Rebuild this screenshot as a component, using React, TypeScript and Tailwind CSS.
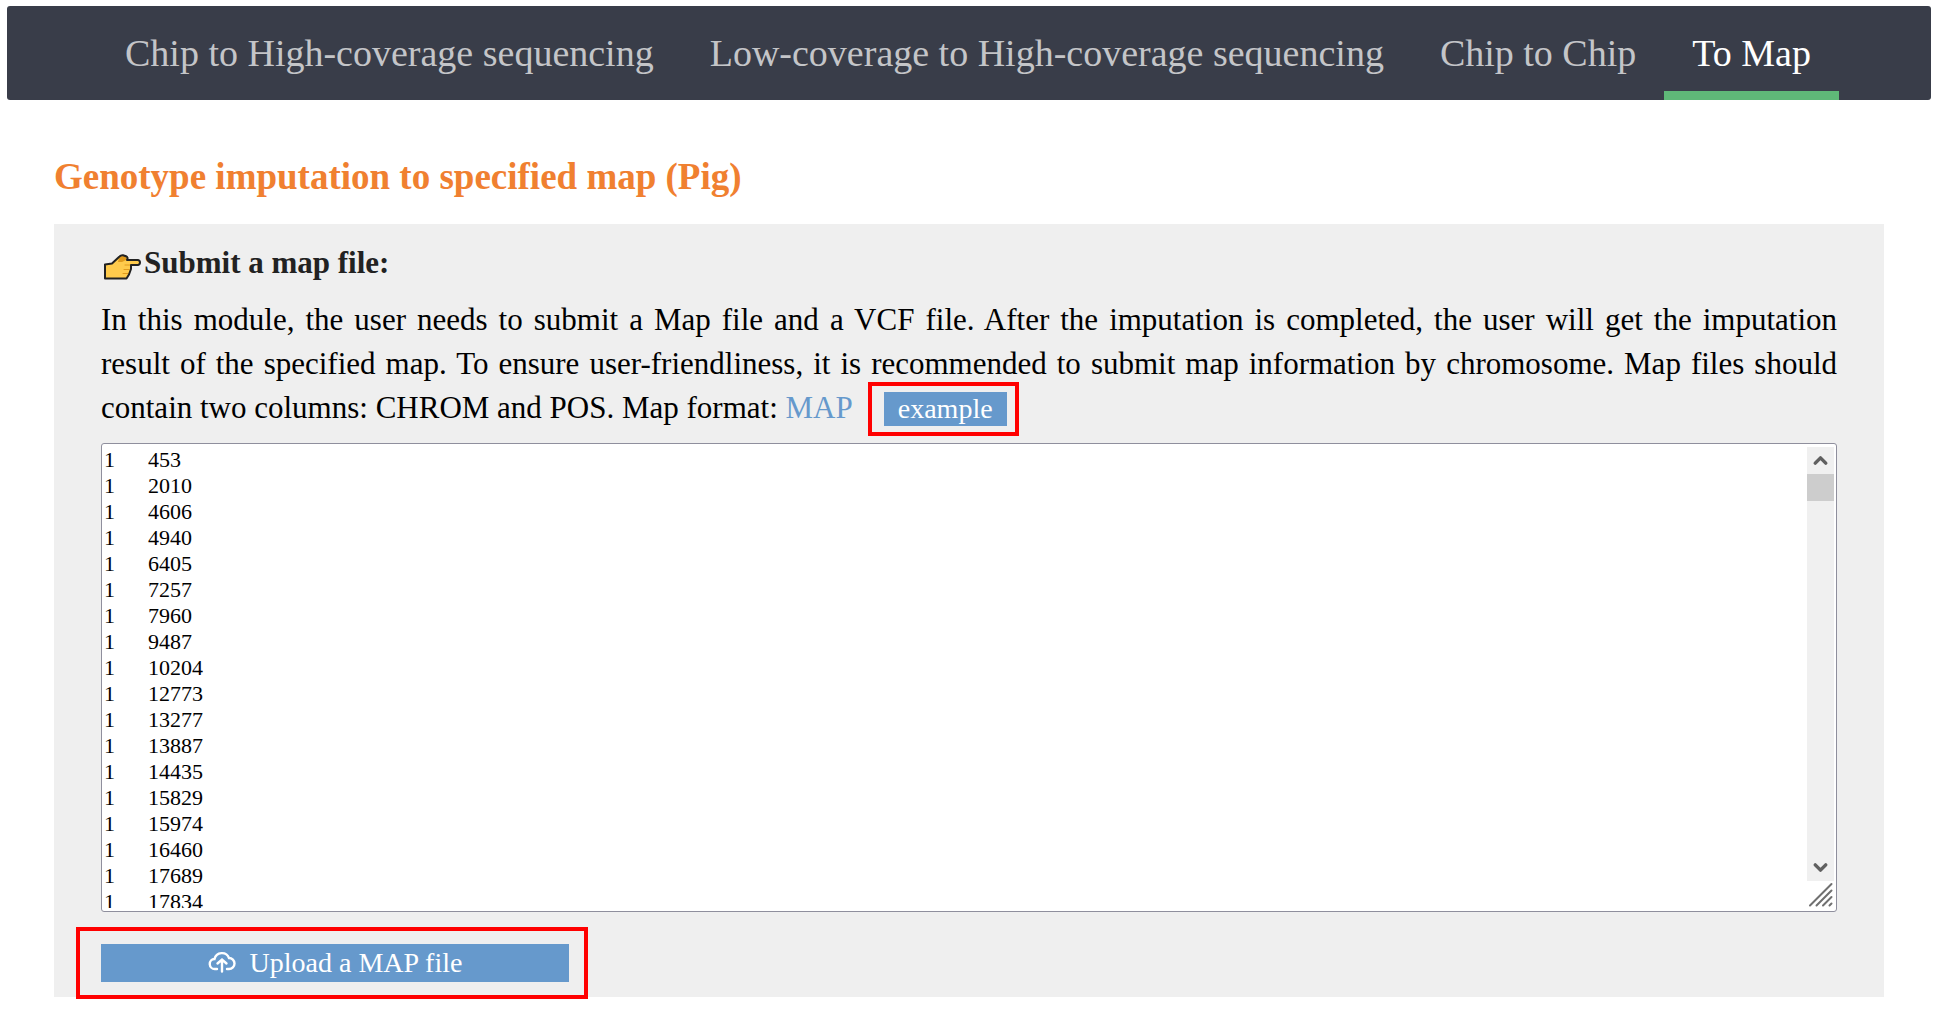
import { ChevronDown, ChevronUp } from 'lucide-react';

const tabs = [
    { label: 'Chip to High-coverage sequencing', active: false },
    { label: 'Low-coverage to High-coverage sequencing', active: false },
    { label: 'Chip to Chip', active: false },
    { label: 'To Map', active: true },
];

const positions = [
    453, 2010, 4606, 4940, 6405, 7257, 7960, 9487, 10204, 12773, 13277, 13887,
    14435, 15829, 15974, 16460, 17689, 17834,
];

const mapText = positions.map((pos) => `1\t${pos}`).join('\n');

export default function App() {
    return (
        <div className="bg-white pt-1.5 pb-4 font-['Liberation_Serif',serif] text-black">
            <NavBar />
            <main className="mx-[54px] pt-[53px]">
                <h1 className="text-[37px] leading-[48px] font-bold text-[#f08030]">
                    Genotype imputation to specified map (Pig)
                </h1>
                <section className="mt-[23px] bg-[#efefef] px-[47px] pt-[18px] pb-[15px]">
                    <h2 className="flex items-center text-[31px] leading-[42px] font-bold text-[#222]">
                        <PointingHand />
                        <label htmlFor="map-data">Submit a map file:</label>
                    </h2>
                    <p className="mt-[14px] text-justify text-[31px] leading-[44px]">
                        In this module, the user needs to submit a Map file and a VCF file. After the
                        imputation is completed, the user will get the imputation result&nbsp;of the specified
                        map. To ensure user-friendliness, it is recommended to submit map information by
                        chromosome. Map files should contain&nbsp;two columns: CHROM and POS. Map format:{' '}
                        <a href="#map" className="text-[#6699cc]">
                            MAP
                        </a>
                        <span className="relative ml-[31px] inline-block leading-[34px]">
                            <button type="button" className="block h-[34px] bg-[#6699cc] px-[14px] text-[28px] leading-[34px] text-white">
                                example
                            </button>
                            <Highlight className="-top-[10px] -right-3 -bottom-[10px] -left-4" />
                        </span>
                    </p>
                    <MapEditor />
                    <div className="relative mt-8 w-[468px]">
                        <button
                            type="button"
                            className="flex h-[38px] w-full items-center justify-center gap-[14px] bg-[#6699cc] text-[28px] leading-[38px] text-white"
                        >
                            <CloudUpload />
                            Upload a MAP file
                        </button>
                        <Highlight className="-top-[17px] -right-[19px] -bottom-[17px] -left-[25px]" />
                    </div>
                </section>
            </main>
        </div>
    );
}

function NavBar() {
    return (
        <nav className="mx-[7px] flex rounded-[3px] bg-[#393d49] pl-[90px] text-[38px]">
            {tabs.map((tab) => (
                <a
                    key={tab.label}
                    href="#"
                    className={
                        tab.active
                            ? 'h-[94px] border-b-[9px] border-[#5fb878] px-[28px] leading-[94px] text-white'
                            : 'h-[94px] px-[28px] leading-[94px] text-[#c4c5c8]'
                    }
                >
                    {tab.label}
                </a>
            ))}
        </nav>
    );
}

function MapEditor() {
    return (
        <div className="mt-[13px] flex h-[469px] rounded-[3px] border border-[#8f8f9d] bg-white px-[2px] py-[3px]">
            <textarea
                id="map-data"
                className="flex-1 resize-none overflow-hidden bg-white text-[22px] leading-[26px] outline-none [tab-size:8]"
                defaultValue={mapText}
            />
            {/* Scroll bar */}
            <div className="flex w-[27px] flex-col">
                <div className="flex flex-1 flex-col items-center justify-between bg-[#f0f0f0]">
                    <div className="w-full">
                        <ChevronUp size={27} strokeWidth={4} className="p-[3px] text-[#606060]" />
                        <div className="h-[27px] bg-[#cdcdcd]" />
                    </div>
                    <ChevronDown size={27} strokeWidth={4} className="p-[3px] text-[#606060]" />
                </div>
                <ResizeGrip />
            </div>
        </div>
    );
}

function Highlight({ className }: { className: string }) {
    return <span className={`pointer-events-none absolute border-4 border-[#ff0000] ${className}`} />;
}

function ResizeGrip() {
    return (
        <svg width="27" height="27" viewBox="0 0 27 27" stroke="#707070" strokeWidth="2" strokeLinecap="round">
            <path d="M3 24.5L24.5 3M9.5 24.5L24.5 9.5M16 24.5L24.5 16M22.5 24.5L24.5 22.5" />
        </svg>
    );
}

function PointingHand() {
    return (
        <svg width="43" height="42" viewBox="0 0 43 42" strokeLinejoin="round" strokeLinecap="round">
            <path
                d="M4 22.5L11 21.5L18.5 14.5Q20 13 22 13.3L25 14.2Q27.5 15.5 26 18H37Q39 18.5 39 20.5T37 23H30V27L28 32.5L25.5 36.5H4Z"
                fill="#ffcb4c"
            />
            <path d="M18 16L21 13.5L25 14.5L26 17.5L21 20L17 20Z" fill="#e09a1c" />
            <path d="M24 23H29M23 27.5H28M22 31.5H27" stroke="#e09a1c" fill="none" />
            <path
                d="M4 22.5L11 21.5L18.5 14.5Q20 13 22 13.3L25 14.2Q27.5 15.5 26 18H37Q39 18.5 39 20.5T37 23H30V27L28 32.5L25.5 36.5H4Z"
                fill="none"
                stroke="#222"
                strokeWidth="2"
            />
        </svg>
    );
}

function CloudUpload() {
    return (
        <svg width="28" height="26" viewBox="0 0 28 26" fill="none" stroke="#fff" strokeWidth="2.4" strokeLinecap="round">
            <path d="M9 19H7A5 5 0 0 1 6.500 9A7.600 7.600 0 0 1 21 8A5.500 5.500 0 0 1 21 19H19M14 21.500V10M9.500 13.500L14 9.500L18.500 13.500" />
        </svg>
    );
}
